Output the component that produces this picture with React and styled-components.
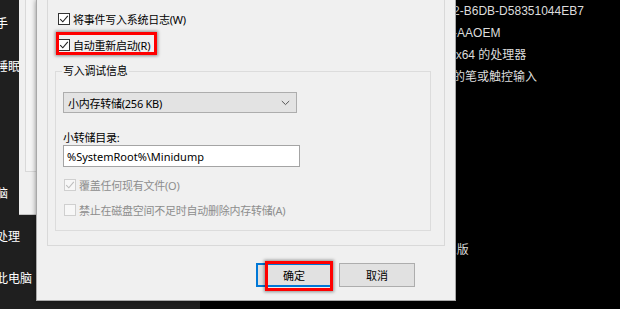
import { Fragment } from "react";
import styled, { createGlobalStyle } from "styled-components";

const GlobalStyle = createGlobalStyle`
    html, body {
        margin: 0;
        padding: 0;
        background: #000;
        overflow: hidden;
    }
    * {
        box-sizing: border-box;
    }
`;

const Desktop = styled.div`
    position: relative;
    width: 620px;
    height: 309px;
    display: flex;
    background: #000;
    overflow: hidden;
    font-family: "Noto Sans", "Noto Sans CJK SC", sans-serif;
`;

const NavPane = styled.div`
    width: 200px;
    flex: none;
    background: #1f1f1f;
    overflow: hidden;
    padding-top: 1.75px;
`;

const NavItem = styled.div`
    height: 42.5px;
    display: flex;
    align-items: center;
    margin-left: -40px;
    white-space: nowrap;
    color: #fff;
    font-size: 12px;
`;

const ContentPane = styled.div`
    flex: 1;
    padding-left: 40px;
    color: #dcdcdc;
    font-family: "Liberation Sans", "Noto Sans CJK SC", sans-serif;
    font-size: 12px;
`;

const InfoGrid = styled.div`
    display: grid;
    grid-template-columns: ${props => props.$labelWidth}px 1fr;
    grid-auto-rows: 22px;
    line-height: 22px;
    white-space: nowrap;
    margin-top: ${props => props.$gap || 0}px;
`;

const BackWindow = styled.div`
    position: absolute;
    left: 19px;
    top: 0;
    width: 120px;
    height: 215px;
    background: #f0f0f0;
    border-bottom: 1px solid #c4c4c4;
    padding-left: 6px;
`;

const BackTab = styled.div`
    height: 172px;
    border: 1px solid #d9d9d9;
    border-top: none;
    background: #f4f4f4;
`;

const Dialog = styled.div`
    position: absolute;
    left: 36px;
    top: 0;
    width: 420px;
    height: 301px;
    background: #f0f0f0;
    border: 1px solid #a8a8a8;
    border-top: none;
    box-shadow: 0 0 5px rgba(0, 0, 0, 0.45);
    padding: 0 10px;
    display: flex;
    flex-direction: column;
    font-size: 11px;
    color: #000;
`;

const TabPage = styled.div`
    height: 246px;
    border: 1px solid #d9d9d9;
    border-top: none;
    padding: 9px 0 0 7px;
`;

const CheckRow = styled.div`
    position: relative;
    height: 20px;
    display: flex;
    align-items: center;
    gap: 3px;
    padding-left: ${props => props.$inset ?? 3}px;
    margin-top: ${props => props.$top || 0}px;
    letter-spacing: -0.25px;
    color: ${props => (props.$disabled ? "#8d8d8d" : "#000")};
    white-space: nowrap;
`;

const Box = styled.span`
    width: 12px;
    height: 12px;
    flex: none;
    display: flex;
    align-items: center;
    justify-content: center;
    background: ${props => (props.$disabled ? "#f7f7f7" : "#fff")};
    border: 1px solid ${props => (props.$disabled ? "#cfcfcf" : "#333")};
`;

const RedFrame = styled.div`
    position: absolute;
    left: ${props => props.$left}px;
    top: ${props => props.$top}px;
    width: ${props => props.$w}px;
    height: ${props => props.$h}px;
    border: 3px solid #ff0000;
    box-shadow: 0 0 3px 1px rgba(0, 0, 0, 0.4);
    pointer-events: none;
`;

const GroupBox = styled.div`
    position: relative;
    width: 376px;
    height: 160px;
    margin-top: 16px;
    border: 1px solid #dcdcdc;
    padding: 20px 0 0 7px;
`;

const Legend = styled.span`
    position: absolute;
    left: 6px;
    top: -8px;
    padding: 0 1px;
    line-height: 14px;
    background: #f0f0f0;
    letter-spacing: -0.25px;
`;

const Select = styled.div`
    width: 234px;
    height: 21px;
    display: flex;
    align-items: center;
    justify-content: space-between;
    padding: 0 6px 0 4px;
    background: #e3e3e3;
    border: 1px solid #adadad;
    letter-spacing: -0.25px;
`;

const FieldLabel = styled.div`
    margin-top: 18px;
    line-height: 14px;
    letter-spacing: -0.25px;
`;

const TextInput = styled.div`
    width: 237px;
    height: 22px;
    display: flex;
    align-items: center;
    padding-left: 3px;
    background: #fff;
    border: 1px solid #a4a4a4;
`;

const ButtonRow = styled.div`
    display: flex;
    justify-content: flex-end;
    gap: 7px;
    margin-top: 17px;
    padding-right: 30px;
`;

const ButtonWrap = styled.div`
    position: relative;
`;

const Button = styled.div`
    width: 76px;
    height: 24px;
    display: flex;
    align-items: center;
    justify-content: center;
    background: #e1e1e1;
    border: ${props => (props.$default ? "2px solid #0078d7" : "1px solid #adadad")};
`;

const Tick = ({ color = "#222" }) => (
    <svg width="10" height="10" viewBox="0 0 10 10">
        <path d="M1.2 5.2 L3.8 7.8 L8.8 1.8" fill="none" stroke={color} strokeWidth="1.1" />
    </svg>
);

const Chevron = () => (
    <svg width="9" height="6" viewBox="0 0 9 6">
        <path d="M0.8 1 L4.5 4.6 L8.2 1" fill="none" stroke="#555" strokeWidth="1" />
    </svg>
);

const Check = ({ checked, disabled, children, ...rest }) => (
    <CheckRow $disabled={disabled} {...rest}>
        <Box $disabled={disabled}>{checked && <Tick color={disabled ? "#bdbdbd" : "#222"} />}</Box>
        <span>{children}</span>
    </CheckRow>
);

const navItems = ["专注助手", "电源和睡眠", "电池", "存储", "平板电脑", "多任务处理", "投影到此电脑", "体验共享"];

const deviceSpecs = [
    ["设备 ID", "51738412-3145-4192-B6DB-D58351044EB7"],
    ["产品 ID", "00330-80000-00000-AAOEM"],
    ["系统类型", "64 位操作系统, 基于 x64 的处理器"],
    ["笔和触控", "没有可用于此显示器的笔或触控输入"],
];

function App() {
    return (
        <>
            <GlobalStyle />
            <Desktop>
                <NavPane>
                    {navItems.map(item => (
                        <NavItem key={item}>{item}</NavItem>
                    ))}
                </NavPane>
                <ContentPane>
                    <InfoGrid $labelWidth={105}>
                        {deviceSpecs.map(([label, value]) => (
                            <Fragment key={label}>
                                <span>{label}</span>
                                <span>{value}</span>
                            </Fragment>
                        ))}
                    </InfoGrid>
                    <InfoGrid $labelWidth={124} $gap={151}>
                        <span>版本</span>
                        <span>Windows 10 专业版</span>
                    </InfoGrid>
                </ContentPane>

                <BackWindow>
                    <BackTab />
                </BackWindow>

                <Dialog>
                    <TabPage>
                        <Check checked>将事件写入系统日志(W)</Check>
                        <Check checked $top={6}>
                            自动重新启动(R)
                            <RedFrame $left={1} $top={-3} $w={101} $h={23} />
                        </Check>
                        <GroupBox>
                            <Legend>写入调试信息</Legend>
                            <Select>
                                <span>小内存转储(256 KB)</span>
                                <Chevron />
                            </Select>
                            <FieldLabel>小转储目录:</FieldLabel>
                            <TextInput>%SystemRoot%\Minidump</TextInput>
                            <Check checked disabled $inset={1} $top={8}>覆盖任何现有文件(O)</Check>
                            <Check disabled $inset={1} $top={5}>禁止在磁盘空间不足时自动删除内存转储(A)</Check>
                        </GroupBox>
                    </TabPage>
                    <ButtonRow>
                        <ButtonWrap>
                            <Button $default>确定</Button>
                            <RedFrame $left={9} $top={-2} $w={68} $h={30} />
                        </ButtonWrap>
                        <Button>取消</Button>
                    </ButtonRow>
                </Dialog>
            </Desktop>
        </>
    );
}

export default App;
